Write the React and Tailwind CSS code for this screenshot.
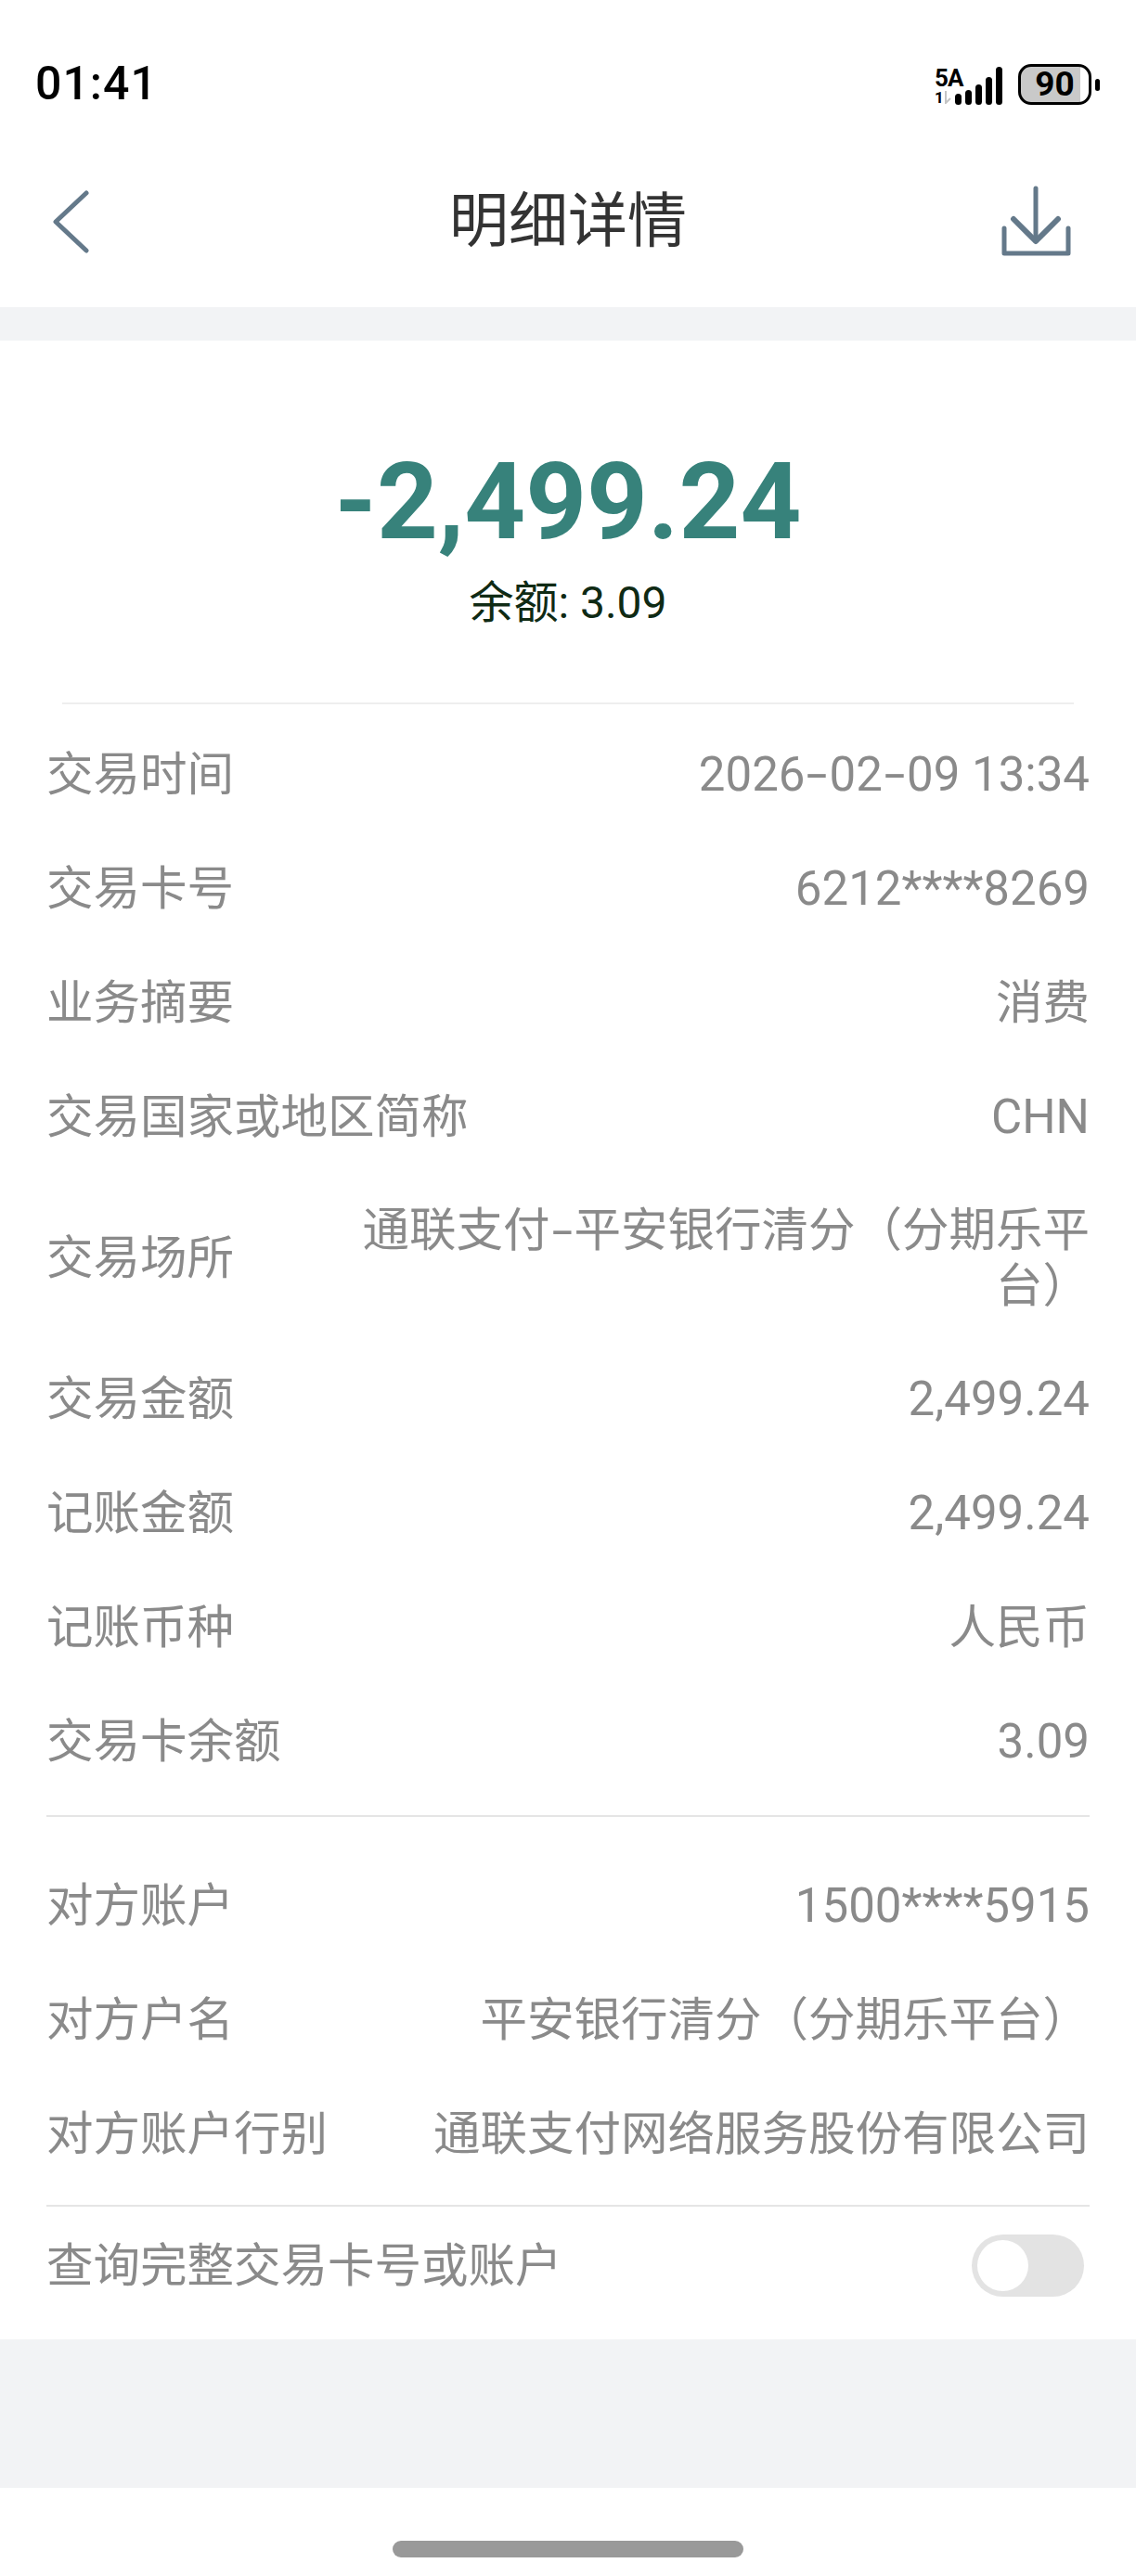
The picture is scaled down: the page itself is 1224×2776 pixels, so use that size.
const FONT = "font-['Roboto','Noto_Sans_CJK_SC',sans-serif]";

const topRows = [
  { label: '交易时间', value: '2026-02-09 13:34', num: true },
  { label: '交易卡号', value: '6212****8269', num: true },
  { label: '业务摘要', value: '消费' },
  { label: '交易国家或地区简称', value: 'CHN', num: true },
  { label: '交易场所', value: '通联支付-平安银行清分（分期乐平台）', tall: true },
  { label: '交易金额', value: '2,499.24', num: true },
  { label: '记账金额', value: '2,499.24', num: true },
  { label: '记账币种', value: '人民币' },
  { label: '交易卡余额', value: '3.09', num: true },
];

const otherRows = [
  { label: '对方账户', value: '1500****5915', num: true },
  { label: '对方户名', value: '平安银行清分（分期乐平台）' },
  { label: '对方账户行别', value: '通联支付网络服务股份有限公司' },
];

function withWideDash(text) {
  return text.split('-').map((part, i) => (
    <span key={i}>
      {i > 0 && <span className="mx-[6px] inline-block scale-x-[1.6]">-</span>}
      {part}
    </span>
  ));
}

function Row({ label, value, tall, num }) {
  return (
    <div className={`flex items-center justify-between ${tall ? 'h-[181px]' : 'h-[123px]'}`}>
      <span className="shrink-0 text-[50.5px] leading-[60px] text-[#8a8a8a]">{label}</span>
      <span className={`w-[800px] text-right leading-[60px] text-[#8a8a8a] ${num ? 'text-[51px]' : 'text-[50.5px]'}`}>
        {withWideDash(value)}
      </span>
    </div>
  );
}

function StatusBar() {
  return (
    <div className="flex h-[170px] items-start justify-between pl-[38px] pr-[39px] pt-[60px]">
      <span className="text-[50px] font-medium leading-[60px] tracking-[1px] text-black">01:41</span>
      <div className="flex items-end pt-[9px]">
        <div className="flex h-[42px] w-[22px] flex-col items-start leading-none">
          <span className="whitespace-nowrap text-[26px] font-bold leading-[26px] tracking-[-1px] text-black">5A</span>
          <div className="flex items-center">
            <span className="text-[17px] font-bold leading-[16px] text-black">1</span>
            <svg width="8" height="14" viewBox="0 0 8 14" fill="none" stroke="#c4c4c4" strokeWidth="2">
              <path d="M2 0V13L7 8" />
            </svg>
          </div>
        </div>
        <div className="flex items-end gap-[4px]">
          <div className="h-[12px] w-[7px] rounded-full bg-black" />
          <div className="h-[16px] w-[7px] rounded-full bg-black" />
          <div className="h-[22px] w-[7px] rounded-full bg-black" />
          <div className="h-[30px] w-[7px] rounded-full bg-black" />
          <div className="h-[41px] w-[7px] rounded-full bg-black" />
        </div>
        <div className="ml-[17px] flex h-[44px] w-[79px] items-center justify-center rounded-[14px] border-[3px] border-black bg-[linear-gradient(90deg,#c9c9c9_88%,#fff_88%)] text-[37px] font-bold text-black">
          90
        </div>
        <div className="mb-[15px] ml-[4px] h-[13px] w-[5px] rounded-full bg-black" />
      </div>
    </div>
  );
}

export default function App() {
  return (
    <div className={`flex h-[2776px] w-[1224px] flex-col bg-white ${FONT}`}>
      <StatusBar />

      <div className="relative flex h-[161px] items-start justify-between pl-[56px] pr-[70px] pt-[30px]">
        {/* back arrow */}
        <svg className="mt-[5px]" width="40" height="68" viewBox="0 0 40 68" fill="none" stroke="#64798a" strokeWidth="5" strokeLinecap="round" strokeLinejoin="round">
          <path d="M37 3L4 34L37 65" />
        </svg>
        <span className="absolute left-0 right-0 top-[29px] text-center text-[64px] leading-[80px] text-[#333333]">明细详情</span>
        {/* download */}
        <svg width="76" height="76" viewBox="0 0 76 76" fill="none" stroke="#64798a" strokeWidth="5" strokeLinecap="round" strokeLinejoin="round">
          <path d="M38 3V60" />
          <path d="M14 36L38 60L62 36" strokeWidth="6" />
          <path d="M4 46V73H73V46" />
        </svg>
      </div>

      <div className="h-[36px] bg-[#f2f3f5]" />

      <div className="flex h-[390px] flex-col items-center">
        <div className="mt-[109px] text-[115px] font-bold leading-[130px] text-[#37827b]">-2,499.24</div>
        <div className="mt-[14px] text-[48px] leading-[60px] text-[#0f2a14]">余额: 3.09</div>
      </div>

      <div className="mx-[67px] h-[2px] bg-[#eeeeee]" />

      <div className="px-[50px] pt-[14px]">
        {topRows.map((row) => (
          <Row key={row.label} {...row} />
        ))}
      </div>

      <div className="mx-[50px] mt-[18px] h-[2px] bg-[#e5e5e5]" />

      <div className="px-[50px] pt-[34px]">
        {otherRows.map((row) => (
          <Row key={row.label} {...row} />
        ))}
      </div>

      <div className="mx-[50px] mt-[15px] h-[2px] bg-[#e5e5e5]" />

      <div className="flex h-[143px] items-center justify-between pb-[16px] pl-[50px] pr-[56px]">
        <span className="text-[50.5px] text-[#8a8a8a]">查询完整交易卡号或账户</span>
        <div className="flex h-[67px] w-[121px] items-center rounded-full bg-[#e3e3e3] pl-[6px]">
          <div className="h-[55px] w-[55px] rounded-full bg-white" />
        </div>
      </div>

      <div className="h-[160px] bg-[#f2f3f5]" />

      <div className="flex flex-1 items-center justify-center pt-[36px]">
        <div className="h-[18px] w-[378px] rounded-full bg-[#999999]" />
      </div>
    </div>
  );
}
